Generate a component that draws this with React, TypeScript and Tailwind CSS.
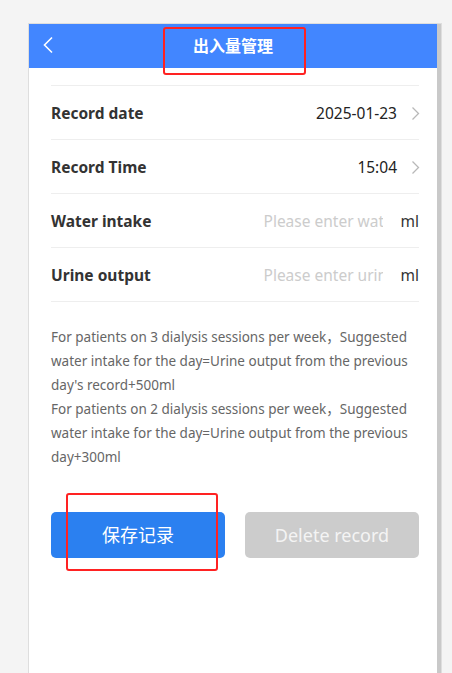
import React from "react";

const font = { fontFamily: '"Noto Sans", "Noto Sans CJK SC", sans-serif' };

function Chevron() {
  return (
    <svg width="9" height="15" viewBox="0 0 9 15" className="ml-[14px] mr-[-1px]">
      <polyline points="1.5,1.5 7.5,7.5 1.5,13.5" fill="none" stroke="#b8b8b8" strokeWidth="1.3" />
    </svg>
  );
}

function Row({ label, children }: { label: string; children: React.ReactNode }) {
  return (
    <div className="flex h-[54px] items-center justify-between border-b border-[#eeeeee] pt-[2px]">
      <span className="text-[15.5px] font-bold text-[#333333]">{label}</span>
      <div className="flex items-center">{children}</div>
    </div>
  );
}

export default function App() {
  return (
    <div className="relative min-h-screen bg-[#f4f4f4] pt-[23px] pl-[28px]" style={font}>
      <div className="flex w-[414px] h-[650px] border-t border-l border-r border-[#dedede]">
        <div className="w-[408px] bg-white">
          <div className="relative flex h-[44px] items-center justify-center bg-[#4286ff]">
            <svg width="12" height="18" viewBox="0 0 12 18" className="absolute left-[13px] top-[12px]">
              <polyline points="10,1.5 2.5,9 10,16.5" fill="none" stroke="white" strokeWidth="1.6" />
            </svg>
            <span className="text-[16px] font-bold text-white">出入量管理</span>
          </div>
          <div className="pl-[22px] pr-[18px] pt-[17px]">
            <div className="border-t border-[#eeeeee]">
              <Row label="Record date">
                <span className="text-[15.5px] text-[#222222]">2025-01-23</span>
                <Chevron />
              </Row>
              <Row label="Record Time">
                <span className="text-[15.5px] text-[#222222]">15:04</span>
                <Chevron />
              </Row>
              <Row label="Water intake">
                <input
                  placeholder="Please enter water intake"
                  className="w-[119px] bg-transparent p-0 text-[15.5px] text-[#333333] outline-none placeholder:text-[#cccccc]"
                  style={font}
                />
                <span className="ml-[18px] text-[15.5px] text-[#333333]">ml</span>
              </Row>
              <Row label="Urine output">
                <input
                  placeholder="Please enter urine output"
                  className="w-[119px] bg-transparent p-0 text-[15.5px] text-[#333333] outline-none placeholder:text-[#cccccc]"
                  style={font}
                />
                <span className="ml-[18px] text-[15.5px] text-[#333333]">ml</span>
              </Row>
            </div>
            <div className="mt-[23px] text-[13.5px] leading-[24px] text-[#666666]">
              <p>For patients on 3 dialysis sessions per week，Suggested water intake for the day=Urine output from the previous day's record+500ml</p>
              <p>For patients on 2 dialysis sessions per week，Suggested water intake for the day=Urine output from the previous day+300ml</p>
            </div>
            <div className="mt-[43px] flex gap-[20px]">
              <button className="h-[46px] flex-1 rounded-[5px] bg-[#2b80f0] text-[18px] text-white">保存记录</button>
              <button className="h-[46px] flex-1 rounded-[5px] bg-[#cccccc] text-[18px] text-[#f4f4f4]">Delete record</button>
            </div>
          </div>
        </div>
        <div className="w-[4px] bg-[#c9c9c9]"></div>
      </div>
      <div className="absolute left-[163px] top-[27px] h-[48px] w-[143px] rounded-[3px] border-2 border-[#ff2222]"></div>
      <div className="absolute left-[66px] top-[493px] h-[78px] w-[152px] rounded-[3px] border-2 border-[#ff2222]"></div>
    </div>
  );
}
